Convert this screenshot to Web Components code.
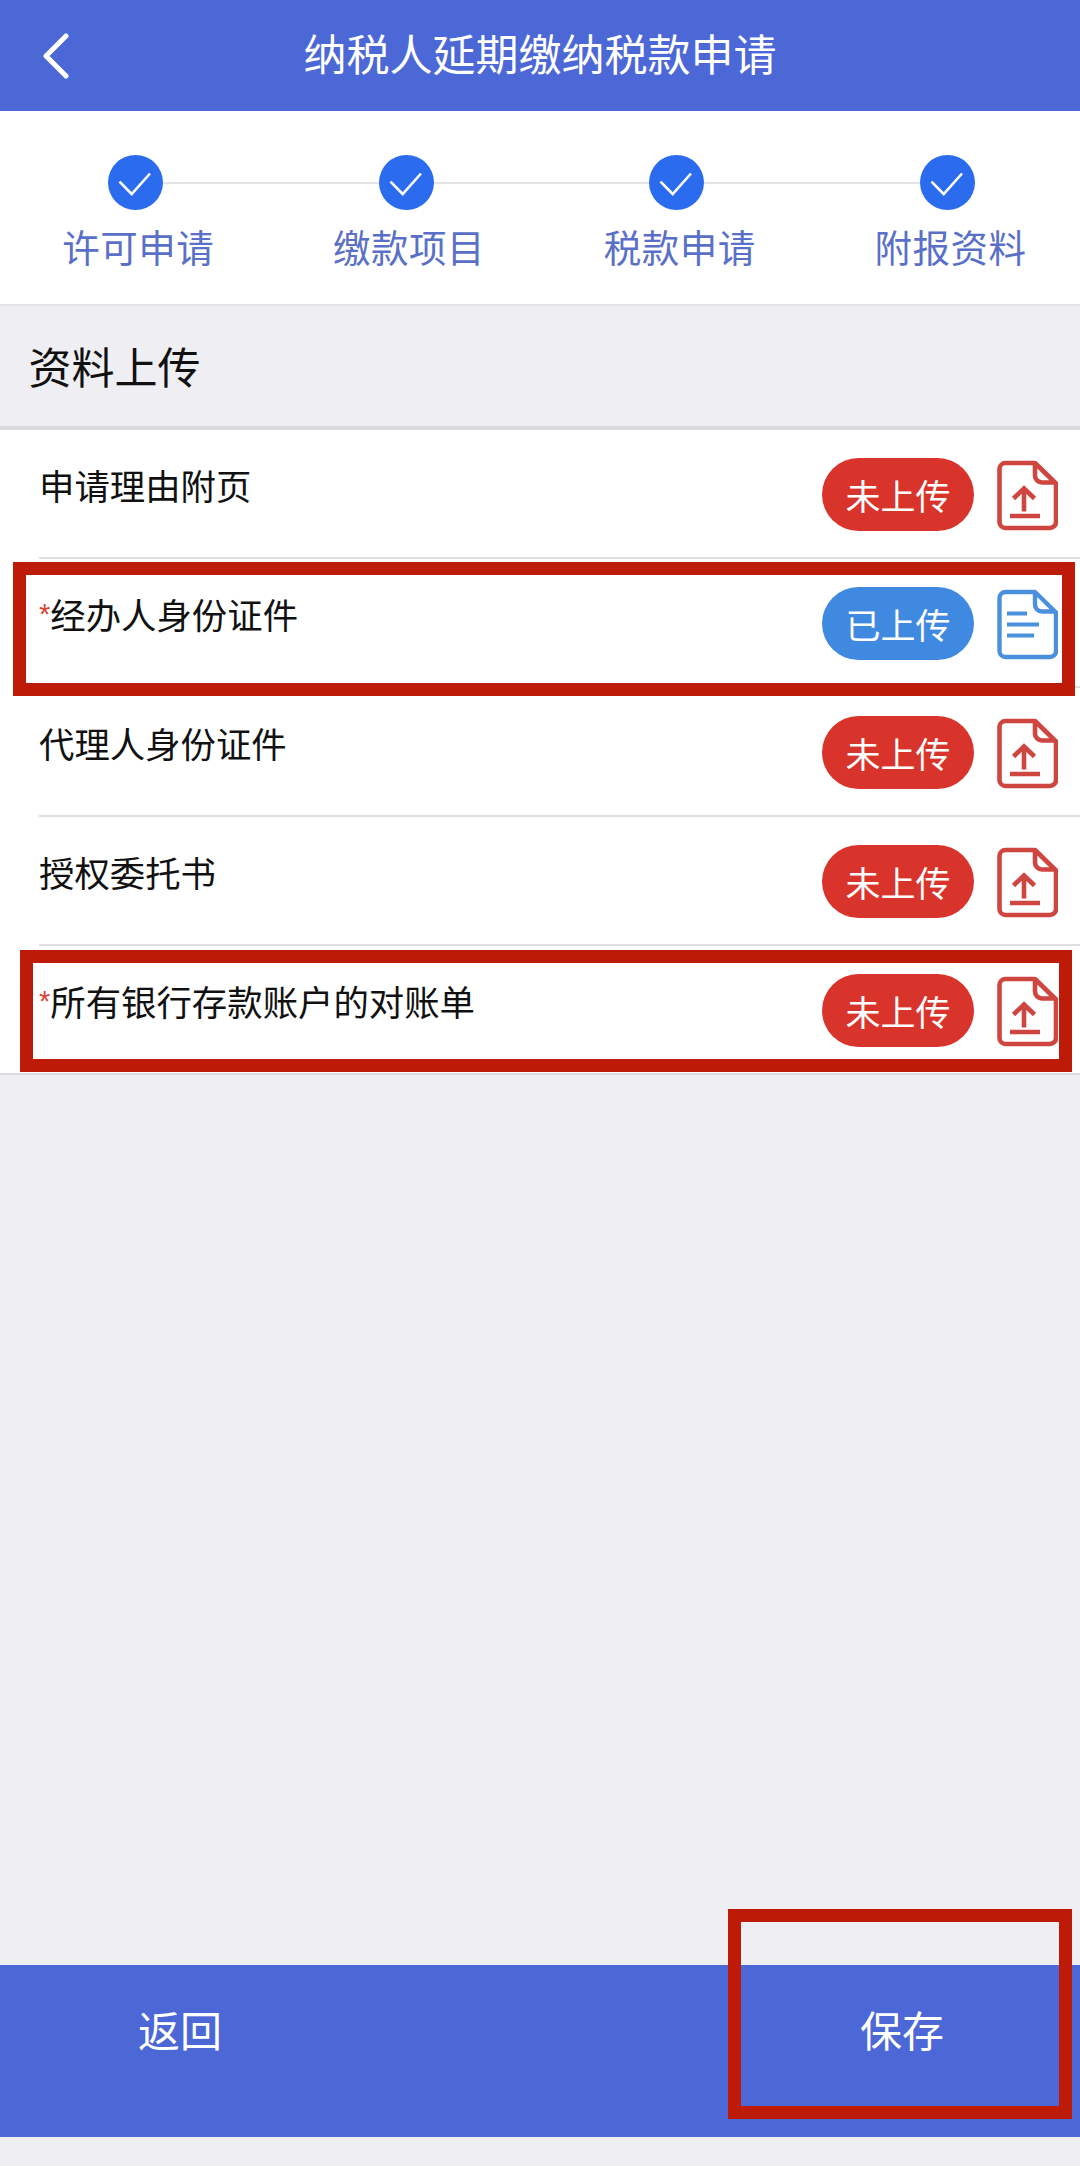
<!DOCTYPE html>
<html lang="zh-CN">
<head>
<meta charset="utf-8">
<title>纳税人延期缴纳税款申请</title>
<style>
    html, body {
        margin: 0;
        padding: 0;
    }
    body {
        position: relative;
        width: 1080px;
        height: 2166px;
        overflow: hidden;
        display: flex;
        flex-direction: column;
        background: #eeeef3;
        font-family: "Noto Sans CJK SC", "Liberation Sans", sans-serif;
    }
</style>
</head>
<body>
    <app-header>纳税人延期缴纳税款申请</app-header>
    <step-bar>
        <step-item first>许可申请</step-item>
        <step-item>缴款项目</step-item>
        <step-item>税款申请</step-item>
        <step-item last>附报资料</step-item>
    </step-bar>
    <section-title>资料上传</section-title>
    <upload-list>
        <upload-row>申请理由附页</upload-row>
        <upload-row required uploaded>经办人身份证件</upload-row>
        <upload-row>代理人身份证件</upload-row>
        <upload-row>授权委托书</upload-row>
        <upload-row required last>所有银行存款账户的对账单</upload-row>
    </upload-list>
    <bottom-bar></bottom-bar>

    <mark-box x="13" y="562" w="1062" h="134"></mark-box>
    <mark-box x="20" y="950" w="1052" h="122"></mark-box>
    <mark-box x="728" y="1909" w="344" h="210"></mark-box>

<script>
class AppHeader extends HTMLElement {
    constructor() {
        super();
        const shadow = this.attachShadow({ mode: "open" });
        shadow.innerHTML = `
            <style>
                :host {
                    display: grid;
                    grid-template-columns: 1fr auto 1fr;
                    align-items: center;
                    flex: none;
                    height: 111px;
                    background: #4c67d6;
                    color: #fff;
                }
                svg {
                    display: block;
                    margin-left: 42px;
                }
                .title {
                    padding-bottom: 7px;
                    font-size: 43px;
                    line-height: 60px;
                    white-space: nowrap;
                }
            </style>
            <svg width="28" height="46" viewBox="0 0 28 46">
                <path d="M24 3 L4 23 L24 43" fill="none" stroke="#fff" stroke-width="5" stroke-linecap="round" stroke-linejoin="round"/>
            </svg>
            <div class="title"><slot></slot></div>
            <div></div>
            `;
    }
}

class StepBar extends HTMLElement {
    constructor() {
        super();
        const shadow = this.attachShadow({ mode: "open" });
        shadow.innerHTML = `
            <style>
                :host {
                    display: grid;
                    grid-template-columns: repeat(4, 270.7px);
                    flex: none;
                    box-sizing: border-box;
                    height: 195px;
                    padding-top: 44px;
                    background: #fff;
                    border-bottom: 2px solid #e6e6ea;
                }
            </style>
            <slot></slot>
            `;
    }
}

class StepItem extends HTMLElement {
    constructor() {
        super();
        const shadow = this.attachShadow({ mode: "open" });
        shadow.innerHTML = `
            <style>
                :host {
                    display: block;
                }
                .track {
                    display: flex;
                    align-items: center;
                }
                .line {
                    flex: 1;
                    height: 2px;
                    background: #e3e3e8;
                }
                :host([first]) .line.left,
                :host([last]) .line.right {
                    visibility: hidden;
                }
                svg {
                    display: block;
                    flex: none;
                }
                .label {
                    margin-top: 14px;
                    padding-left: 6px;
                    font-size: 37.5px;
                    line-height: 44px;
                    letter-spacing: 0.5px;
                    text-align: center;
                    white-space: nowrap;
                    color: #5a70c8;
                }
            </style>
            <div class="track">
                <div class="line left"></div>
                <svg width="55" height="55" viewBox="0 0 55 55">
                    <circle cx="27.5" cy="27.5" r="27.5" fill="#2b6cee"/>
                    <path d="M11.5 26.7 L23.7 39 L42 18.5" fill="none" stroke="#fff" stroke-width="2.6"/>
                </svg>
                <div class="line right"></div>
            </div>
            <div class="label"><slot></slot></div>
            `;
    }
}

class SectionTitle extends HTMLElement {
    constructor() {
        super();
        const shadow = this.attachShadow({ mode: "open" });
        shadow.innerHTML = `
            <style>
                :host {
                    display: flex;
                    align-items: center;
                    flex: none;
                    box-sizing: border-box;
                    height: 124px;
                    padding: 0 0 2px 28.5px;
                    border-bottom: 4px solid #dadadc;
                    font-size: 43px;
                    color: #111;
                }
            </style>
            <slot></slot>
            `;
    }
}

class UploadList extends HTMLElement {
    constructor() {
        super();
        const shadow = this.attachShadow({ mode: "open" });
        shadow.innerHTML = `
            <style>
                :host {
                    display: block;
                    flex: none;
                    background: #fff;
                    border-bottom: 2px solid #dcdce0;
                }
            </style>
            <slot></slot>
            `;
    }
}

const UPLOAD_ICON = `
    <path d="M38 2.5 H8.5 A6 6 0 0 0 2.5 8.5 V61.5 A6 6 0 0 0 8.5 67.5 H53 A6 6 0 0 0 59 61.5 V23 Z M38 2.5 V15 A7 7 0 0 0 45 22 H59"
        fill="none" stroke="currentColor" stroke-width="4.6" stroke-linejoin="round"/>
    <path d="M27 51 V28 M16.5 38 L27 28 L37.5 38 M13 55.5 H43"
        fill="none" stroke="currentColor" stroke-width="4.6"/>`;

const DOC_ICON = `
    <path d="M38 2.5 H8.5 A6 6 0 0 0 2.5 8.5 V61.5 A6 6 0 0 0 8.5 67.5 H53 A6 6 0 0 0 59 61.5 V23 Z M38 2.5 V15 A7 7 0 0 0 45 22 H59"
        fill="none" stroke="currentColor" stroke-width="4.4" stroke-linejoin="round"/>
    <path d="M10 24 H30 M10 35 H42 M10 46 H37"
        fill="none" stroke="currentColor" stroke-width="4.2"/>`;

class UploadRow extends HTMLElement {
    constructor() {
        super();
        const uploaded = this.hasAttribute("uploaded");
        const required = this.hasAttribute("required");
        const shadow = this.attachShadow({ mode: "open" });
        shadow.innerHTML = `
            <style>
                :host {
                    display: block;
                    margin-left: 39px;
                    border-bottom: 2px solid #dfdfe2;
                }
                :host([last]) {
                    border-bottom: none;
                }
                .row {
                    display: flex;
                    justify-content: space-between;
                    box-sizing: border-box;
                    height: 127px;
                    padding: 28px 22px 0 0;
                }
                .name {
                    padding-top: 7px;
                    font-size: 35.4px;
                    line-height: 40px;
                    white-space: nowrap;
                    color: #111;
                }
                .star {
                    position: relative;
                    top: -5px;
                    font-family: "Liberation Sans", sans-serif;
                    font-size: 29px;
                    color: #d9453c;
                }
                .actions {
                    display: flex;
                    align-items: flex-start;
                    gap: 23px;
                }
                .pill {
                    width: 152px;
                    height: 73px;
                    border-radius: 37px;
                    background: ${uploaded ? "#3f8ae0" : "#d9342b"};
                    color: #fff;
                    font-size: 35px;
                    line-height: 73px;
                    text-align: center;
                }
                svg {
                    display: block;
                    margin-top: 2px;
                    color: ${uploaded ? "#4a90dc" : "#cf4640"};
                }
            </style>
            <div class="row">
                <div class="name">${required ? '<span class="star">*</span>' : ""}<slot></slot></div>
                <div class="actions">
                    <div class="pill">${uploaded ? "已上传" : "未上传"}</div>
                    <svg width="61" height="71" viewBox="0 0 61 70">${uploaded ? DOC_ICON : UPLOAD_ICON}</svg>
                </div>
            </div>
            `;
    }
}

class BottomBar extends HTMLElement {
    constructor() {
        super();
        const shadow = this.attachShadow({ mode: "open" });
        shadow.innerHTML = `
            <style>
                :host {
                    display: flex;
                    flex: none;
                    box-sizing: border-box;
                    height: 172px;
                    margin-top: auto;
                    margin-bottom: 29px;
                    padding-top: 39px;
                    background: #4c67d6;
                    color: #fff;
                    font-size: 42px;
                    line-height: 50px;
                    text-align: center;
                }
                .back {
                    width: 360px;
                }
                .save {
                    width: 356px;
                    margin-left: auto;
                }
            </style>
            <div class="back">返回</div>
            <div class="save">保存</div>
            `;
    }
}

// red annotation frames drawn on top of the screenshot
class MarkBox extends HTMLElement {
    constructor() {
        super();
        const shadow = this.attachShadow({ mode: "open" });
        shadow.innerHTML = `
            <style>
                :host {
                    display: block;
                    position: absolute;
                    box-sizing: border-box;
                    border: 13px solid #bd1a08;
                }
            </style>
            `;
    }

    connectedCallback() {
        this.style.left = this.getAttribute("x") + "px";
        this.style.top = this.getAttribute("y") + "px";
        this.style.width = this.getAttribute("w") + "px";
        this.style.height = this.getAttribute("h") + "px";
    }
}

customElements.define("app-header", AppHeader);
customElements.define("step-bar", StepBar);
customElements.define("step-item", StepItem);
customElements.define("section-title", SectionTitle);
customElements.define("upload-list", UploadList);
customElements.define("upload-row", UploadRow);
customElements.define("bottom-bar", BottomBar);
customElements.define("mark-box", MarkBox);
</script>
</body>
</html>
